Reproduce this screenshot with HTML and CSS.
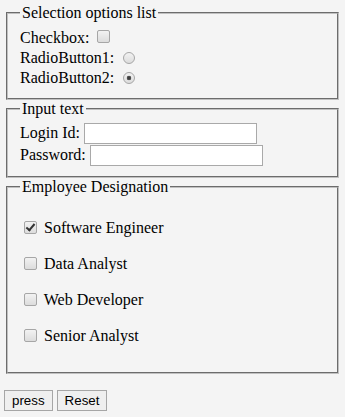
FILE: index.html
```html
<!DOCTYPE html>
<html>
<head>
<meta charset="utf-8">
<link rel="stylesheet" href="styles.css">
</head>
<body>
<form class="form">
  <fieldset class="group">
    <legend class="legend">Selection options list</legend>
    <div class="line">Checkbox: <input class="chk" type="checkbox"></div>
    <div class="line">RadioButton1: <input class="radio" type="radio" name="r"></div>
    <div class="line">RadioButton2: <input class="radio" type="radio" name="r" checked></div>
  </fieldset>
  <fieldset class="group">
    <legend class="legend">Input text</legend>
    <div class="field">Login Id: <input class="txt" type="text"></div>
    <div class="field">Password: <input class="txt" type="password"></div>
  </fieldset>
  <fieldset class="group">
    <legend class="legend">Employee Designation</legend>
    <p class="item"><input class="chk" type="checkbox" checked> Software Engineer</p>
    <p class="item"><input class="chk" type="checkbox"> Data Analyst</p>
    <p class="item"><input class="chk" type="checkbox"> Web Developer</p>
    <p class="item"><input class="chk" type="checkbox"> Senior Analyst</p>
  </fieldset>
  <div class="actions">
    <button class="btn" type="button">press</button>
    <button class="btn" type="reset">Reset</button>
  </div>
</form>
</body>
</html>
```

FILE: styles.css
```css
html { background: #f4f4f4; }
body {
  margin: 4px;
  font-family: "Liberation Serif", "Times New Roman", serif;
  font-size: 16px;
  color: #000;
}
.form { margin: 0; }
.group {
  margin: 0 2px;
  padding: 0.35em 0.75em 0.625em;
  border: 2px groove #c0c0c0;
}
.legend { padding: 0 2px; }
.line { line-height: 20px; }
.field { line-height: 18px; }
.field:first-of-type .txt { margin-bottom: 1px; }
.item { margin: 16px 0; line-height: 20px; }
.chk {
  -webkit-appearance: none;
  appearance: none;
  position: relative;
  width: 13px;
  height: 13px;
  margin: 0 3px 0 4px;
  box-sizing: border-box;
  border: 1px solid #a6a6a6;
  border-radius: 2px;
  background: linear-gradient(#f2f2f2, #dcdcdc);
  vertical-align: 0;
}
.item .chk { vertical-align: -1px; }
.chk:checked::after {
  content: "";
  position: absolute;
  left: 3px;
  top: 0px;
  width: 3px;
  height: 7px;
  border: solid #333;
  border-width: 0 2px 2px 0;
  transform: rotate(40deg);
}
.radio {
  -webkit-appearance: none;
  appearance: none;
  width: 12px;
  height: 12px;
  margin: 0 3px 0 5px;
  box-sizing: border-box;
  border: 1px solid #a6a6a6;
  border-radius: 50%;
  background: linear-gradient(#f2f2f2, #dcdcdc);
  vertical-align: -1px;
}
.radio:checked {
  background: radial-gradient(circle, #333 0, #555 2px, transparent 2.6px), linear-gradient(#f2f2f2, #dcdcdc);
}
.txt {
  width: 173px;
  height: 21px;
  box-sizing: border-box;
  margin: 0;
  padding: 1px 2px;
  border: 1px solid #a9a9a9;
  background: #fff;
  font: 13.333px "Liberation Sans", Arial, sans-serif;
}
.actions { margin-top: 16px; display: flex; gap: 4px; }
.btn {
  margin: 0;
  padding: 1px 7px;
  height: 21px;
  border: 1px solid #a6a6a6;
  background: #efefef;
  font: 13.333px "Liberation Sans", Arial, sans-serif;
  color: #000;
}
```
